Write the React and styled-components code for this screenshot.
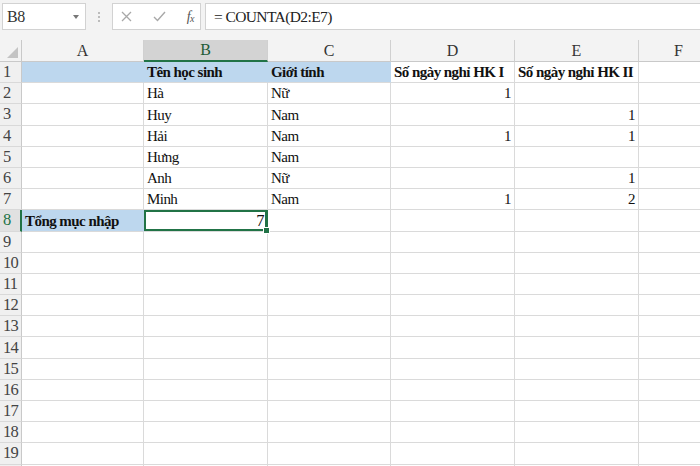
import React from "react";
import styled, { createGlobalStyle } from "styled-components";

const Global = createGlobalStyle`
  html, body { margin: 0; padding: 0; background: #fff; overflow: hidden; }
  #root { width: 700px; height: 466px; }
`;

const serif = `"Liberation Serif", "Times New Roman", serif`;

const Page = styled.div`
  width: 700px;
  height: 466px;
  overflow: hidden;
  display: flex;
  flex-direction: column;
  background: #fff;
  font-family: ${serif};
`;

const Toolbar = styled.div`
  height: 40px;
  box-sizing: border-box;
  padding: 3px 0 0 2px;
  background: #f3f3f3;
  display: flex;
  align-items: flex-start;
  flex-shrink: 0;
`;

const Box = styled.div`
  height: 27px;
  box-sizing: border-box;
  background: #fff;
  border: 1px solid #d2d2d2;
  display: flex;
  align-items: center;
`;

const NameBox = styled(Box)`
  width: 84px;
  padding: 0 4px 0 4px;
  justify-content: space-between;
  font-family: ${serif};
  font-size: 16px;
  color: #333;
  letter-spacing: -0.5px;
`;

const Caret = styled.span`
  width: 0;
  height: 0;
  border-left: 3px solid transparent;
  border-right: 3px solid transparent;
  border-top: 4px solid #777;
  margin-right: 2px;
`;

const Dots = styled.div`
  width: 26px;
  height: 27px;
  display: flex;
  flex-direction: column;
  align-items: center;
  justify-content: center;
  gap: 2px;
  span {
    width: 2px;
    height: 2px;
    background: #bcbcbc;
  }
`;

const FxGroup = styled(Box)`
  width: 89px;
  padding: 0 6px 0 8px;
  justify-content: space-between;
  color: #a8a8a8;
`;

const FxLabel = styled.span`
  font-family: ${serif};
  font-style: italic;
  font-size: 14px;
  color: #555;
  letter-spacing: -0.5px;
  sub { font-size: 10px; vertical-align: -1px; }
`;

const FormulaBox = styled(Box)`
  flex: 1;
  margin-left: 4px;
  padding-left: 8px;
  border-right: none;
  font-family: ${serif};
  font-size: 15.5px;
  color: #222;
  letter-spacing: -0.6px;
`;

const Sheet = styled.div`
  display: grid;
  grid-template-columns: 22px 122px 124px 123px 124px 124px 80px;
  grid-template-rows: 22px;
  grid-auto-rows: 21.2px;
  flex: 1;
`;

const Corner = styled.div`
  background: #f3f3f3;
  border-right: 1px solid #c9c9c9;
  border-bottom: 1px solid #c9c9c9;
  position: relative;
  &::after {
    content: "";
    position: absolute;
    right: 3px;
    bottom: 3px;
    width: 0;
    height: 0;
    border-left: 11px solid transparent;
    border-bottom: 11px solid #c4c4c4;
  }
`;

const ColHead = styled.div`
  background: ${(p) => (p.$active ? "#d3d3d3" : "#f3f3f3")};
  border-right: 1px solid #d0d0d0;
  border-bottom: ${(p) => (p.$active ? "2px solid #217346" : "1px solid #c9c9c9")};
  box-sizing: border-box;
  display: flex;
  align-items: center;
  justify-content: center;
  font-family: ${serif};
  font-size: 16px;
  color: ${(p) => (p.$active ? "#1e5c38" : "#333")};
`;

const RowHead = styled.div`
  background: ${(p) => (p.$active ? "#e1e1e1" : "#f0f0f0")};
  border-right: ${(p) => (p.$active ? "2px solid #217346" : "1px solid #c9c9c9")};
  border-bottom: 1px solid #d9d9d9;
  box-sizing: border-box;
  display: flex;
  align-items: center;
  padding-left: 3px;
  font-family: ${serif};
  font-size: 16.5px;
  color: ${(p) => (p.$active ? "#217346" : "#444")};
  letter-spacing: -0.8px;
`;

const Cell = styled.div`
  position: relative;
  box-sizing: border-box;
  background: ${(p) => (p.$fill ? "#bdd7ee" : "#fff")};
  border-right: 1px solid ${(p) => (p.$fill ? "#bdd7ee" : "#dadada")};
  border-bottom: 1px solid #dadada;
  display: flex;
  align-items: flex-end;
  justify-content: ${(p) => (p.$right ? "flex-end" : "flex-start")};
  padding: 0 3px 1px 3px;
  font-family: ${serif};
  font-size: 15px;
  line-height: 18px;
  font-weight: ${(p) => (p.$bold ? 700 : 400)};
  color: #111;
  letter-spacing: -0.55px;
  white-space: nowrap;
  ${(p) =>
    p.$selected &&
    `
    box-shadow: inset 0 0 0 2px #217346;
    border-right-color: #217346;
    font-size: 16.5px;
  `}
`;

const Handle = styled.span`
  position: absolute;
  right: -3px;
  bottom: -3px;
  width: 5px;
  height: 5px;
  background: #217346;
  border: 1px solid #fff;
  z-index: 2;
`;

const cols = ["A", "B", "C", "D", "E", "F"];

const data = {
  1: { A: { fill: true }, B: { v: "Tên học sinh", bold: true, fill: true }, C: { v: "Giới tính", bold: true, fill: true }, D: { v: "Số ngày nghỉ HK I", bold: true }, E: { v: "Số ngày nghỉ HK II", bold: true } },
  2: { B: { v: "Hà" }, C: { v: "Nữ" }, D: { v: "1", right: true } },
  3: { B: { v: "Huy" }, C: { v: "Nam" }, E: { v: "1", right: true } },
  4: { B: { v: "Hải" }, C: { v: "Nam" }, D: { v: "1", right: true }, E: { v: "1", right: true } },
  5: { B: { v: "Hưng" }, C: { v: "Nam" } },
  6: { B: { v: "Anh" }, C: { v: "Nữ" }, E: { v: "1", right: true } },
  7: { B: { v: "Minh" }, C: { v: "Nam" }, D: { v: "1", right: true }, E: { v: "2", right: true } },
  8: { A: { v: "Tổng mục nhập", bold: true, fill: true }, B: { v: "7", right: true, selected: true } },
};

const XIcon = () => (
  <svg width="11" height="11" viewBox="0 0 11 11" fill="none" stroke="#a8a8a8" strokeWidth="1.3">
    <path d="M1 1 L10 10 M10 1 L1 10" />
  </svg>
);

const CheckIcon = () => (
  <svg width="13" height="11" viewBox="0 0 13 11" fill="none" stroke="#a8a8a8" strokeWidth="1.4">
    <path d="M1 6 L4.5 9.5 L12 1" />
  </svg>
);

export default function App() {
  const rows = Array.from({ length: 20 }, (_, i) => i + 1);
  return (
    <Page>
      <Global />
      <Toolbar>
        <NameBox>
          <span>B8</span>
          <Caret />
        </NameBox>
        <Dots>
          <span />
          <span />
          <span />
        </Dots>
        <FxGroup>
          <XIcon />
          <CheckIcon />
          <FxLabel>
            f<sub>x</sub>
          </FxLabel>
        </FxGroup>
        <FormulaBox>= COUNTA(D2:E7)</FormulaBox>
      </Toolbar>
      <Sheet>
        <Corner />
        {cols.map((c) => (
          <ColHead key={c} $active={c === "B"}>
            {c}
          </ColHead>
        ))}
        {rows.map((r) => (
          <React.Fragment key={r}>
            <RowHead $active={r === 8}>{r < 20 ? r : ""}</RowHead>
            {cols.map((c) => {
              const d = (data[r] && data[r][c]) || {};
              return (
                <Cell
                  key={c}
                  $fill={d.fill}
                  $bold={d.bold}
                  $right={d.right}
                  $selected={d.selected}
                >
                  {d.v}
                  {d.selected && <Handle />}
                </Cell>
              );
            })}
          </React.Fragment>
        ))}
      </Sheet>
    </Page>
  );
}
